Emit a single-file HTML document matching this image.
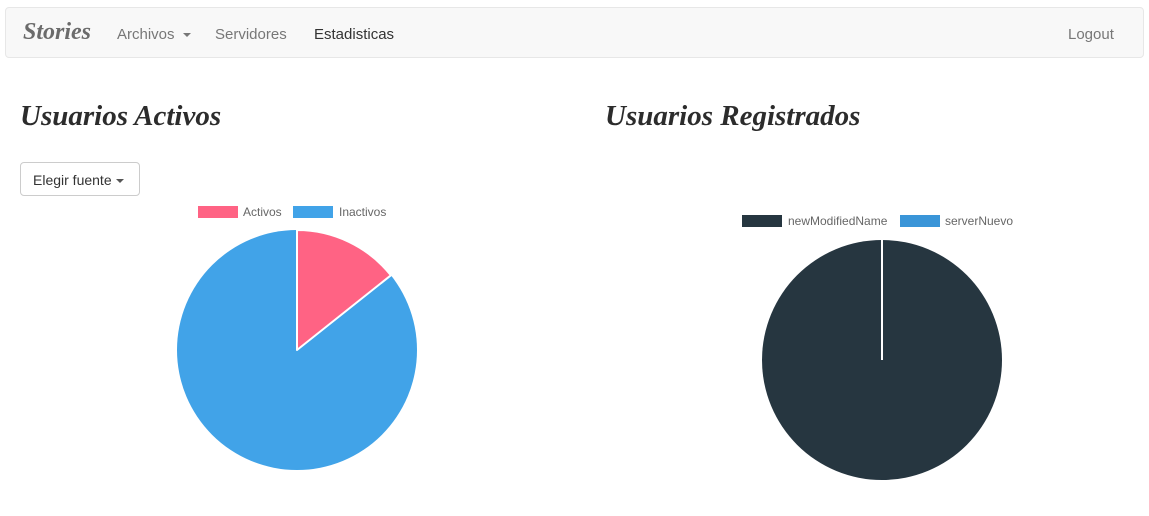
<!DOCTYPE html>
<html><head><meta charset="utf-8"><style>
body{margin:0;width:1149px;height:516px;background:#fff;font-family:"Liberation Sans",sans-serif;position:relative;overflow:hidden}
.nav{position:absolute;left:5px;top:7px;width:1139px;height:51px;background:#f8f8f8;border:1px solid #e7e7e7;border-radius:4px;box-sizing:border-box}
.nav span{position:absolute;top:18px;font-size:15px;color:#777}
.brand{position:absolute;left:17px;top:11px;font-family:"Liberation Serif",serif;font-weight:bold;font-style:italic;font-size:24px;color:#6b6b6b}
h1{position:absolute;margin:0;font-family:"Liberation Serif",serif;font-weight:bold;font-style:italic;font-size:29px;color:#2c2c2c;top:100px}
.btn{position:absolute;left:20px;top:162px;width:120px;height:34px;border:1px solid #ccc;border-radius:4px;font-size:14px;color:#333;box-sizing:border-box;padding:9px 0 0 12px}
.caret{display:inline-block;width:0;height:0;border-left:4px solid transparent;border-right:4px solid transparent;border-top:4px solid #555;vertical-align:middle;margin-left:4px}
.lg{position:absolute;font-size:12px;color:#666}
.sw{position:absolute;width:40px;height:12px}
</style></head><body>
<div class="nav">
<div class="brand">Stories</div>
<span style="left:111px">Archivos <i class="caret" style="border-top-color:#777"></i></span>
<span style="left:209px">Servidores</span>
<span style="left:308px;color:#333">Estadisticas</span>
<span style="left:1062px">Logout</span>
</div>
<h1 style="left:20px">Usuarios Activos</h1>
<h1 style="left:605px">Usuarios Registrados</h1>
<div class="btn">Elegir fuente<i class="caret"></i></div>
<div class="sw" style="left:198px;top:206px;background:#ff6384"></div><div class="lg" style="left:243px;top:205px">Activos</div>
<div class="sw" style="left:293px;top:206px;background:#41a3e8"></div><div class="lg" style="left:339px;top:205px">Inactivos</div>
<div class="sw" style="left:742px;top:215px;background:#263640"></div><div class="lg" style="left:788px;top:214px">newModifiedName</div>
<div class="sw" style="left:900px;top:215px;background:#3a95d8"></div><div class="lg" style="left:945px;top:214px">serverNuevo</div>
<svg width="1149" height="516" style="position:absolute;left:0;top:0">
<circle cx="297" cy="350" r="120" fill="#41a3e8"/>
<path d="M297 350 L297 230 A120 120 0 0 1 390.9 275.3 Z" fill="#ff6384" stroke="#fff" stroke-width="2" stroke-linejoin="round"/>
<circle cx="882" cy="360" r="120" fill="#263640"/>
<line x1="882" y1="240" x2="882" y2="360" stroke="#fff" stroke-width="2"/>
</svg>
</body></html>
